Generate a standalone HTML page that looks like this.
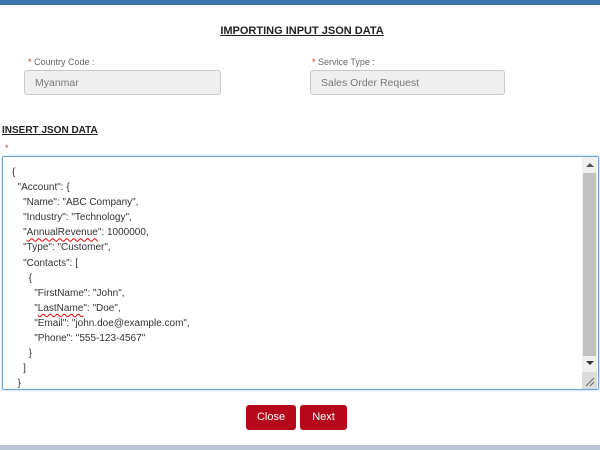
<!DOCTYPE html>
<html><head><style>
*{margin:0;padding:0;box-sizing:border-box}
body{width:600px;height:450px;background:#fff;font-family:"Liberation Sans",sans-serif;position:relative;overflow:hidden;color:#3e3e3c}
.abs{position:absolute}
.top{left:0;top:0;width:600px;height:5px;background:#3c74ad}
.bot{left:0;top:445px;width:600px;height:5px;background:#b9c5d3}
.title{left:0;width:600px;top:25px;text-align:center;font-size:11px;font-weight:bold;text-decoration:underline;color:#222;padding-left:4px}
.lbl{font-size:9px;color:#666}
.lbl b{color:#c23934;font-weight:normal}
.inp{height:25px;border:1px solid #c9c9c9;border-radius:3px;background:#efefef;font-size:10.5px;color:#777;padding:6px 0 0 10px}
.ta{left:2px;top:156px;width:597px;height:234px;border:1px solid #6ba5e0;border-radius:2px;box-shadow:0 0 2px #9cc4ee;overflow:hidden}
.code{position:absolute;left:9px;top:8px;font-size:10px;line-height:15.1px;white-space:pre;color:#333}
.sq{text-decoration:underline wavy #e00;text-decoration-thickness:1px;text-underline-offset:2px}
.sb{right:1px;top:0;width:15px;height:232px;background:#f0f0f0}
.thumb{left:1px;top:16px;width:13px;height:183px;background:#c1c1c1}
.btn{top:405px;height:25px;background:#b5081a;color:#fff;font-size:11px;border-radius:3px;text-align:center;line-height:25px}
</style></head><body>
<div class="abs top"></div>
<div class="abs title">IMPORTING INPUT JSON DATA</div>
<div class="abs lbl" style="left:28px;top:57px"><b>*</b> Country Code :</div>
<div class="abs inp" style="left:24px;top:70px;width:197px">Myanmar</div>
<div class="abs lbl" style="left:312px;top:57px"><b>*</b> Service Type :</div>
<div class="abs inp" style="left:310px;top:70px;width:195px">Sales Order Request</div>
<div class="abs" style="left:2px;top:125px;font-size:10px;font-weight:bold;text-decoration:underline;color:#222">INSERT JSON DATA</div>
<div class="abs" style="left:5px;top:143px;font-size:9px;color:#c23934">*</div>
<div class="abs ta">
<div class="code">{
  "Account": {
    "Name": "ABC Company",
    "Industry": "Technology",
    "<span class="sq">AnnualRevenue</span>": 1000000,
    "Type": "Customer",
    "Contacts": [
      {
        "FirstName": "John",
        "<span class="sq">LastName</span>": "Doe",
        "Email": "john.doe@example.com",
        "Phone": "555-123-4567"
      }
    ]
  }</div>
<div class="abs sb">
<div class="abs" style="left:4px;top:6px;border-left:4px solid transparent;border-right:4px solid transparent;border-bottom:4px solid #555"></div>
<div class="abs thumb"></div>
<div class="abs" style="left:4px;top:204px;border-left:4px solid transparent;border-right:4px solid transparent;border-top:4px solid #333"></div>
<div class="abs" style="left:0;top:215px;width:15px;height:17px;background:#dcdcdc"></div>
<svg class="abs" style="left:3px;top:220px" width="10" height="10"><path d="M1 9L9 1M5 9L9 5" stroke="#666" stroke-width="1"/></svg>
</div>
</div>
<div class="abs btn" style="left:246px;width:50px">Close</div>
<div class="abs btn" style="left:300px;width:47px">Next</div>
<div class="abs bot"></div>
</body></html>
